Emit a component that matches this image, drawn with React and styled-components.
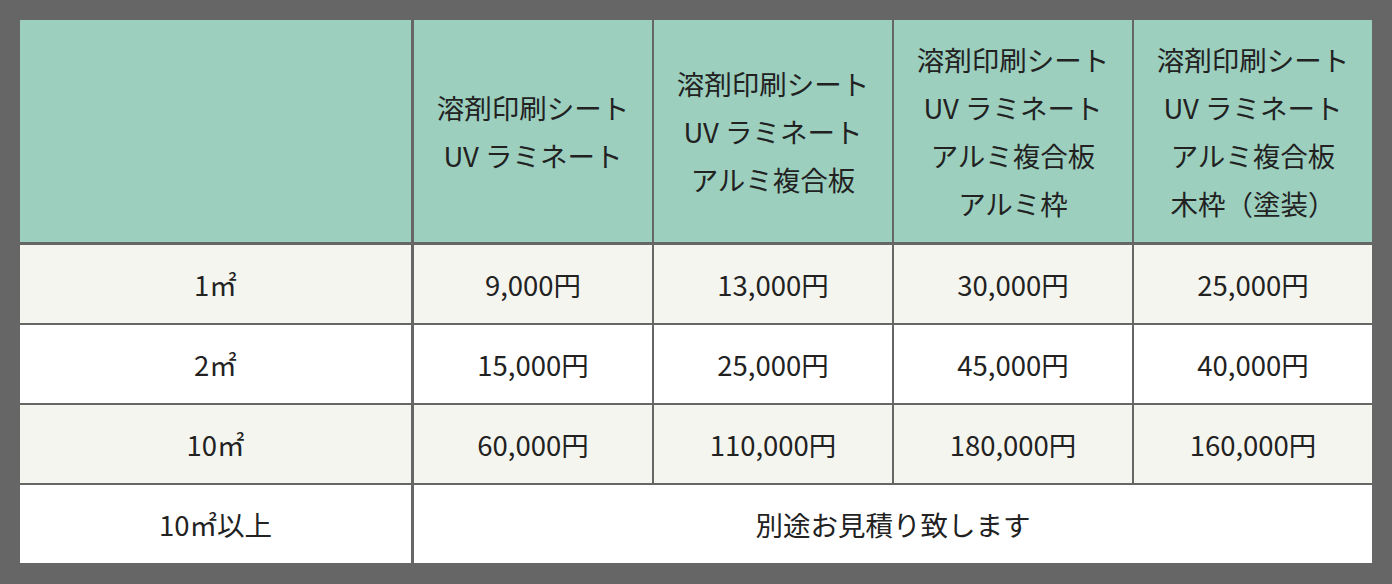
import styled, { createGlobalStyle } from "styled-components";

const GlobalStyle = createGlobalStyle`
  html, body {
    margin: 0;
    padding: 0;
    background: #666666;
  }
  body {
    font-family: "Noto Sans CJK JP", "Noto Sans", sans-serif;
    color: #222222;
  }
`;

const Page = styled.div`
  padding: 20px;
  width: 1352px;
`;

const PriceGrid = styled.div`
  display: grid;
  grid-template-columns: 392px repeat(4, 238px);
  grid-template-rows: 223px repeat(4, 78px);
  gap: 2px;
  background: #666666;
`;

const Cell = styled.div`
  display: flex;
  align-items: center;
  justify-content: center;
  text-align: center;
  font-size: 27.5px;
  line-height: 48px;
  background: ${(props) => (props.head ? "#9ccfbe" : props.shade ? "#f5f5ef" : "#ffffff")};
  border-right: ${(props) => (props.first ? "1px solid #666666" : "none")};
  border-bottom: ${(props) => (props.head ? "1px solid #666666" : "none")};
  grid-column: ${(props) => props.span || "auto"};
`;

const headers = [
  ["溶剤印刷シート", "UV ラミネート"],
  ["溶剤印刷シート", "UV ラミネート", "アルミ複合板"],
  ["溶剤印刷シート", "UV ラミネート", "アルミ複合板", "アルミ枠"],
  ["溶剤印刷シート", "UV ラミネート", "アルミ複合板", "木枠（塗装）"],
];

const rows = [
  { size: "1㎡", prices: ["9,000円", "13,000円", "30,000円", "25,000円"] },
  { size: "2㎡", prices: ["15,000円", "25,000円", "45,000円", "40,000円"] },
  { size: "10㎡", prices: ["60,000円", "110,000円", "180,000円", "160,000円"] },
];

const App = () => {
  return (
    <Page>
      <GlobalStyle />
      <PriceGrid>
        <Cell head first />
        {headers.map((lines, i) => (
          <Cell head key={"h" + i}>
            <div>
              {lines.map((line) => (
                <div key={line}>{line}</div>
              ))}
            </div>
          </Cell>
        ))}
        {rows.map((row, r) => [
          <Cell first shade={r % 2 === 0} key={"s" + r}>
            {row.size}
          </Cell>,
          ...row.prices.map((price, c) => (
            <Cell shade={r % 2 === 0} key={r + "-" + c}>
              {price}
            </Cell>
          )),
        ])}
        <Cell first>10㎡以上</Cell>
        <Cell span="2 / 6">別途お見積り致します</Cell>
      </PriceGrid>
    </Page>
  );
};

export default App;
